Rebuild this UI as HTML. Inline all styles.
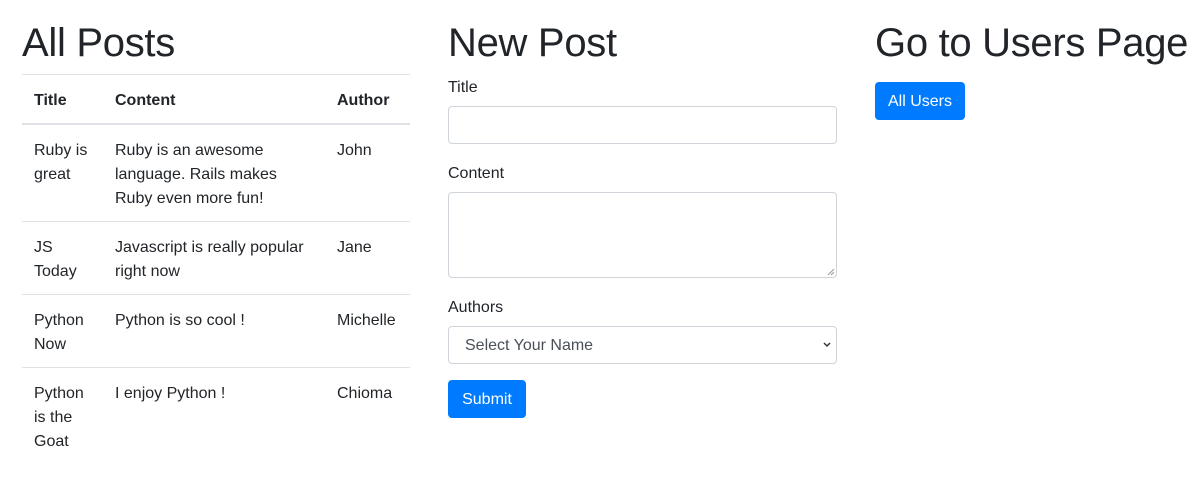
<!DOCTYPE html>
<html><head><style>
*{box-sizing:border-box;margin:0;padding:0}
body{width:1200px;height:494px;background:#fff;color:#212529;font-family:"Liberation Sans",sans-serif;font-size:16px;line-height:24px;position:relative;overflow:hidden}
h1{font-size:40px;font-weight:500;line-height:48px;position:absolute;top:19px;white-space:nowrap;letter-spacing:-0.3px}
.col{position:absolute;top:0}
table{position:absolute;top:74px;left:0;width:388px;border-collapse:collapse}
td,th{padding:14px 12px 10px;vertical-align:top;border-top:1px solid #dee2e6;text-align:left}
th{border-bottom:2px solid #dee2e6;font-weight:bold}
label{display:block;margin-bottom:6px;padding-top:2px}
.in{border:1px solid #ced4da;border-radius:4px;width:389px;background:#fff}
.btn{background:#007bff;color:#fff;border-radius:4px;height:38px;line-height:40px;text-align:center;position:absolute}
</style></head><body>
<div class="col" style="left:22px;width:388px">
<h1 style="left:0">All Posts</h1>
<table>
<tr><th style="width:81px">Title</th><th style="width:222px">Content</th><th>Author</th></tr>
<tr><td>Ruby is great</td><td>Ruby is an awesome language. Rails makes Ruby even more fun!</td><td>John</td></tr>
<tr><td>JS Today</td><td>Javascript is really popular right now</td><td>Jane</td></tr>
<tr><td>Python Now</td><td>Python is so cool !</td><td>Michelle</td></tr>
<tr><td>Python is the Goat</td><td>I enjoy Python !</td><td>Chioma</td></tr>
</table>
</div>
<div class="col" style="left:448px;width:389px">
<h1 style="left:0">New Post</h1>
<div style="position:absolute;top:74px;left:0;width:389px">
<label>Title</label><div class="in" style="height:38px;margin-bottom:16px"></div>
<label>Content</label><div class="in" style="height:86px;margin-bottom:16px;position:relative"><svg style="position:absolute;right:1px;bottom:1px" width="8" height="8"><path d="M7 1L1 7M7 4L4 7" stroke="#999" stroke-width="1"/></svg></div>
<label>Authors</label><div class="in" style="height:38px;line-height:38px;padding-left:16px;color:#495057;position:relative">Select Your Name<svg style="position:absolute;right:5px;top:15px" width="8" height="6"><path d="M1 1L4 4L7 1" stroke="#333" stroke-width="1.5" fill="none"/></svg></div>
</div>
<div class="btn" style="left:0;top:380px;width:78px">Submit</div>
</div>
<div class="col" style="left:875px;width:330px">
<h1 style="left:0">Go to Users Page</h1>
<div class="btn" style="left:0;top:82px;width:90px">All Users</div>
</div>
</body></html>
